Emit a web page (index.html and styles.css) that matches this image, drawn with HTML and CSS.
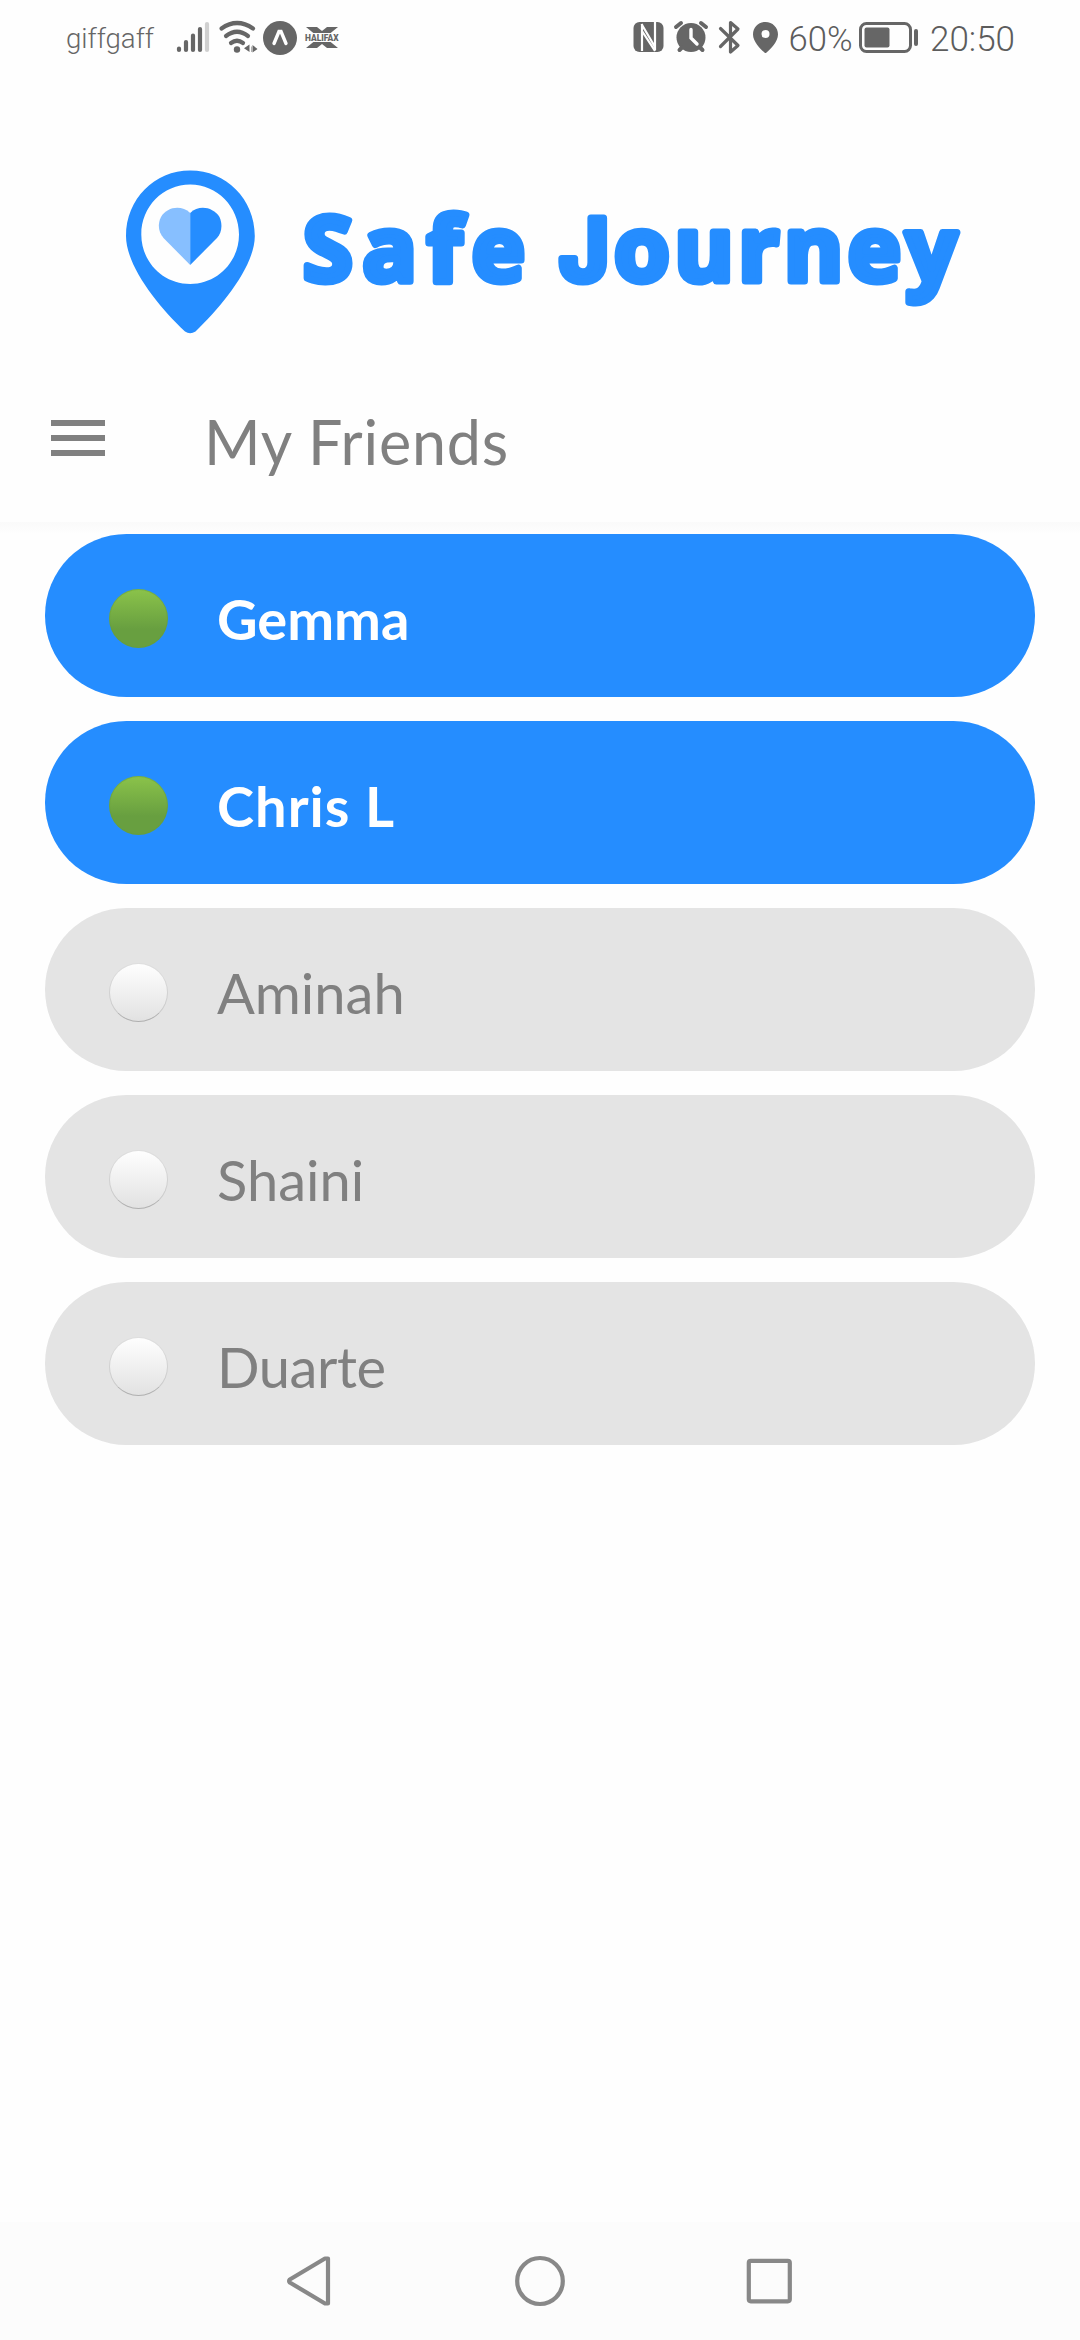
FILE: index.html
```html
<!DOCTYPE html>
<html lang="en">
<head>
<meta charset="utf-8">
<title>Safe Journey - My Friends</title>
<link rel="stylesheet" href="styles.css">
</head>
<body>
<div class="screen">
  <div class="status">
    <svg class="status-left" viewBox="0 0 350 76" width="350" height="76">
      <text x="66" y="48" font-size="27.5" textLength="88" lengthAdjust="spacingAndGlyphs">giffgaff</text>
      <g stroke-width="4.2" stroke-linecap="round">
        <path d="M179 48.5v1.5M186 42v8M193 35.500v14.500M200 29v21"/>
        <path d="M207 24v26" stroke="#d0d0d0"/>
      </g>
      <g fill="none" stroke-width="4.2" stroke-linecap="round">
        <path d="M221.500 28.500Q237 17.500 253 28.500"/>
        <path d="M226 36Q237 27.500 248 36"/>
        <path d="M231 43Q237 38.500 243 43"/>
      </g>
      <circle class="ink" cx="237" cy="49.500" r="3.200"/>
      <path class="ink" d="M249.500 44.500v7.500l-5.500-3.700zM251.500 46.500v5.500h1.500v-5.500zM252.500 45l5 4-5 3.500z"/>
      <circle class="ink" cx="280" cy="38" r="17"/>
      <path d="M274 43.500L279 31.500H281L286 43.500" fill="none" class="white-line"/>
      <path class="ink" d="M306 27h11l5 4 5-4h11l-8 6.500h-16zM306 48h11l5-4 5 4h11l-8-6.500h-16z"/>
      <rect class="band" x="304" y="33" width="36" height="9"/>
      <text class="bank" x="305" y="41" font-size="9.500" textLength="33.500" lengthAdjust="spacingAndGlyphs">HALIFAX</text>
    </svg>
    <svg class="status-right" viewBox="630 0 400 76" width="400" height="76">
      <rect class="ink" x="633.500" y="22" width="30" height="30" rx="6"/>
      <path d="M642 51V24M641.500 24L655 47M655 50V22M642 31L655 51" fill="none" stroke="#fff" stroke-width="2.200"/>
      <circle class="ink" cx="691" cy="37.500" r="14.500"/>
      <path d="M676 27l5-4M706 27l-5-4M679.500 50l3-3M702.500 50l-3-3" stroke-width="4" stroke-linecap="round"/>
      <path d="M691 29.500V38l6 6" fill="none" class="white-line"/>
      <path d="M720.500 28.500L738 45.500 730.500 52V22.500L738 29 720.500 46.500" fill="none" stroke-width="3.200" stroke-linejoin="round" stroke-linecap="round"/>
      <path class="ink" fill-rule="evenodd" d="M765.500 22C758.500 22 753 27.500 753 34.500C753 42 761 49.500 764.500 52.500Q765.500 53.500 766.500 52.500C770 49.500 778 42 778 34.500C778 27.500 772.500 22 765.500 22zM765.500 30a4 4 0 1 1 0 8a4 4 0 1 1 0-8z"/>
      <text class="digits" x="788.500" y="51" textLength="64" lengthAdjust="spacingAndGlyphs">60%</text>
      <rect x="860.500" y="23.500" width="50" height="28" rx="6" fill="none" stroke-width="3"/>
      <rect class="ink" x="864.500" y="27.500" width="25" height="20" rx="2"/>
      <path d="M916 31v13" stroke-width="4" stroke-linecap="round"/>
      <text class="digits" x="930" y="51" textLength="85" lengthAdjust="spacingAndGlyphs">20:50</text>
    </svg>
  </div>

  <div class="brand">
    <svg viewBox="126 170 130 164" width="130" height="164">
      <path fill="#258dff" fill-rule="evenodd" d="M190.200 170.500C154.500 170.500 126 199 126 236C126 266 158 306 185 331.500Q190 335 195.500 331.500C222 306 254.800 266 254.800 236C254.800 199 226 170.500 190.200 170.500zM190.200 184.500C217 184.500 239 206.500 239 234.500C239 262 217 284 190.200 284C163 284 141.300 262 141.300 234.500C141.300 206.500 163 184.500 190.200 184.500z"/>
      <path fill="#87bfff" d="M190.200 213C181 204.500 167 207 161 217C157 225 159 233 163.500 238L190.200 265z"/>
      <path fill="#258dff" d="M190.200 213C199 204.500 213 207 219.500 217C223 225 221.500 233 217 238L190.200 265z"/>
    </svg>
    <svg class="wordmark" viewBox="296 170 670 164" width="670" height="164">
      <text x="303" y="280.500" textLength="222">Safe</text>
      <text x="559" y="280.500" textLength="398"><tspan class="cap-j">J</tspan>ourney</text>
    </svg>
  </div>

  <div class="titlebar">
    <div class="menu"><i></i><i></i><i></i></div>
    <h1 class="title">My Friends</h1>
  </div>

  <ul class="friends">
    <li class="friend online"><span class="dot"></span><span class="name">Gemma</span></li>
    <li class="friend online"><span class="dot"></span><span class="name wide">Chris L</span></li>
    <li class="friend"><span class="dot"></span><span class="name">Aminah</span></li>
    <li class="friend"><span class="dot"></span><span class="name">Shaini</span></li>
    <li class="friend"><span class="dot"></span><span class="name tight">Duarte</span></li>
  </ul>

  <div class="navbar">
    <svg viewBox="280 2222 520 118" width="520" height="118" fill="none" stroke="#888" stroke-width="4.200" stroke-linejoin="round">
      <path d="M289.800 2279.500Q288.500 2281 289.800 2282.500L325 2303.500H328V2258.500H325Z"/>
      <ellipse cx="540" cy="2281" rx="22.800" ry="23"/>
      <rect x="748.800" y="2260.800" width="41" height="40.500" rx="2"/>
    </svg>
  </div>
</div>
</body>
</html>
```

FILE: styles.css
```css
* { box-sizing: border-box; }

body {
  margin: 0;
  background: #fefefe;
  font-family: Lato, "Open Sans", sans-serif;
}

.screen {
  width: 1080px;
  height: 2340px;
  display: flex;
  flex-direction: column;
}

.status {
  height: 76px;
  display: flex;
  justify-content: space-between;
  padding-right: 50px;
}

.status svg { stroke: #666; }
.status text { fill: #666; stroke: none; font-family: Roboto, sans-serif; font-weight: 300; }
.status .digits { font-size: 34.5px; fill: #5c5c5c; }
.status .bank { font-weight: 900; }
.status .band { fill: #fefefe; stroke: none; }
.status .ink { fill: #666; stroke: none; }
.status .white-line { stroke: #fff; stroke-width: 3.4px; stroke-linecap: round; }

.brand {
  height: 302px;
  padding: 94px 0 0 126px;
  display: flex;
  gap: 40px;
}

.wordmark text {
  font-family: "Open Sans", sans-serif;
  font-weight: 700;
  font-size: 90px;
  fill: #258dff;
  stroke: #258dff;
  stroke-width: 7px;
  stroke-linejoin: round;
}

.wordmark .cap-j { font-family: Inter, sans-serif; font-size: 86px; }

.titlebar {
  height: 144px;
  padding: 0 51px;
  display: flex;
  gap: 99px;
}

.menu {
  width: 54px;
  padding-top: 42px;
  display: flex;
  flex-direction: column;
  gap: 9px;
}

.menu i { height: 6px; background: #808080; }

.title {
  margin: 0;
  padding-top: 27px;
  font-size: 61px;
  line-height: 73px;
  font-weight: 400;
  letter-spacing: 0.8px;
  color: #808080;
}

.friends {
  flex: 1;
  margin: 0;
  padding: 12px 45px;
  list-style: none;
  display: flex;
  flex-direction: column;
  gap: 24px;
  background: linear-gradient(#fafafa, #fefefe 12px);
}

.friend {
  height: 163px;
  padding: 6px 0 0 64px;
  border-radius: 82px;
  display: flex;
  align-items: center;
  gap: 49px;
  background: #e4e4e4;
  color: #808080;
}

.dot {
  width: 59px;
  height: 59px;
  border-radius: 50%;
  border: 1px solid #00000020;
  border-bottom-color: #00000038;
  background: linear-gradient(#fff, #e1e1e1) border-box;
}

.name { font-size: 56px; line-height: 68px; }
.name.wide { letter-spacing: 1px; }
.name.tight { letter-spacing: -0.4px; }

.online { background: #258dff; color: #fff; font-weight: 700; }
.online .dot {
  border-color: #689f3880;
  background: linear-gradient(#8bc34a, #689f40 68%) border-box;
}

.navbar {
  height: 118px;
  padding-left: 280px;
  background: #fcfcfc;
}
```
